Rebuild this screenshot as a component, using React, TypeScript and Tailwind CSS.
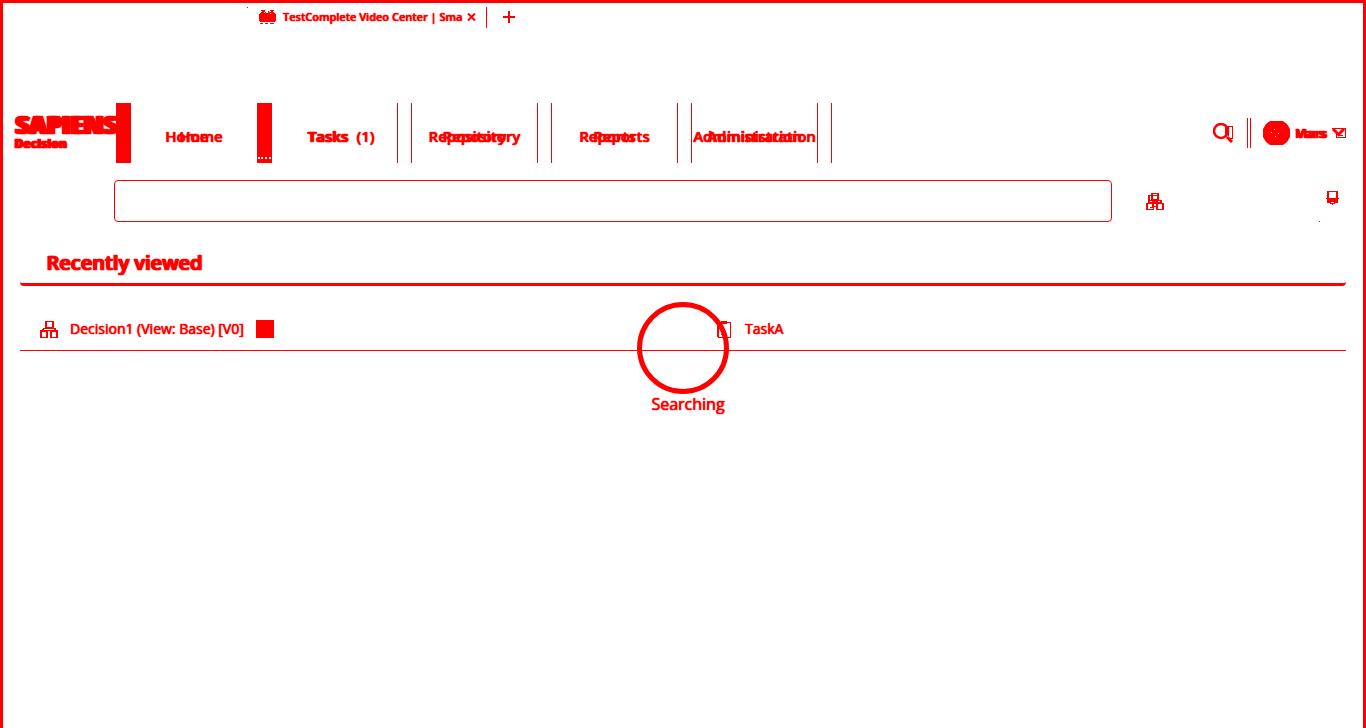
import React from "react";

function Doubled({ first, second }: { first: string; second?: string }) {
  return (
    <span className="grid place-items-center whitespace-pre [text-shadow:0_0_1px_#f00,0_0_1px_#f00]">
      <span className="col-start-1 row-start-1 pr-[14px]">{first}</span>
      <span aria-hidden={second ? undefined : true} className="col-start-1 row-start-1 pl-[14px]">
        {second ?? first}
      </span>
    </span>
  );
}

function HierarchyIcon() {
  return (
    <svg width="18" height="17" viewBox="0 0 18 17" fill="#f00" fillRule="evenodd" shapeRendering="crispEdges" aria-hidden="true">
      <path d="M5 0h9v7h2v2h2v8h-8v-7H8v7H0V9h2V8h1V7h2zM7 1v5h5V1zM4 8v1h10V8zM2 11v5h4v-5zM12 11v5h4v-5z" />
    </svg>
  );
}

function HierarchyPairIcon() {
  return (
    <svg width="18" height="17" viewBox="0 0 18 17" fill="#f00" fillRule="evenodd" shapeRendering="crispEdges" aria-hidden="true">
      <path d="M5 0h8v7h3v3h2v7h-8v-3H8v3H0v-7h2V2h3zM7 1h4v1H7zM7 3v3h4V3zM4 3v4h1V3zM4 8v1h2V8zM12 8v1h2V8zM2 11v5h5v-1H4v-1h2v-3zM12 11v5h4v-5zM8 11v2h2v-2z" />
    </svg>
  );
}

function PageIcon() {
  return (
    <svg width="17" height="14" viewBox="0 0 17 14" fill="#f00" shapeRendering="crispEdges" aria-hidden="true">
      <path d="M2 2h13v1h1v9H1V3h1zM0 4h1v7H0zM16 4h1v7h-1zM2 0h4v1H2zM11 0h4v1h-4zM3 1h3v1H3zM12 1h2v1h-2zM7 1h3v1H7zM1 13h3v1H1zM6 13h3v1H6zM11 13h4v1h-4z" />
      <path d="M7 1h2v2H7zM5 2h1v1H5zM11 3h1v1h-1z" fill="#fff" />
    </svg>
  );
}

function SearchIcon() {
  return (
    <svg width="21" height="20" viewBox="0 0 21 20" fill="none" stroke="#f00" aria-hidden="true">
      <circle cx="8" cy="8" r="7" strokeWidth="2.500" />
      <path d="M14 14l5 5" strokeWidth="3" />
      <path d="M12.500 3.500h7v12h-4M13 4v9M15.500 4v9" strokeWidth="1.500" shapeRendering="crispEdges" />
    </svg>
  );
}

function Avatar() {
  return (
    <svg width="27" height="24" viewBox="0 0 27 24" fill="#f00" aria-hidden="true">
      <path d="M7 0h13l4 3 3 5v8l-3 5-4 3H7l-4-3-3-5V8l3-5z" />
      <path d="M11 8h1v1h-1zM8 11h1v1H8zM15 12h1v1h-1zM12 15h1v1h-1z" fill="#fff" shapeRendering="crispEdges" />
    </svg>
  );
}

function MenuArrow() {
  return (
    <svg width="14" height="10" viewBox="0 0 14 10" fill="none" stroke="#f00" aria-hidden="true">
      <path d="M0 .5h13.500v1M4.500 4v5.500h8.500V2M6 7.500h5" shapeRendering="crispEdges" />
      <path d="M1 1l5.500 5.500L12 1" strokeWidth="3" />
    </svg>
  );
}

function PinIcon() {
  return (
    <svg width="13" height="14" viewBox="0 0 13 14" fill="#f00" shapeRendering="crispEdges" aria-hidden="true">
      <path d="M1 0h11v7h1v1h-1v4H9v1H7v1H6v-1H4v-1H1V8H0V7h1z" />
      <path d="M3 1h7v6H3zM5 11h3v1H5z" fill="#fff" />
    </svg>
  );
}

function ClipboardIcon() {
  return (
    <svg width="14" height="17" viewBox="0 0 14 17" fill="none" stroke="#f00" shapeRendering="crispEdges" aria-hidden="true">
      <path d="M1 1.500h12.500v15H1zM4.500.5h5v2h-5zM4 13.500h3M5 12.500h1" />
      <path d="M1 1v15" strokeWidth="2" />
    </svg>
  );
}

const tabs = ["Repository", "Reports", "Administration"];

export default function App() {
  return (
    <div className="relative min-h-screen border-x-[3px] border-t-[3px] border-[#f00] bg-white font-['Open_Sans','Noto_Sans',sans-serif] text-[#f00] [text-shadow:0_0_1px_#f00,0_0_1px_#f00]">
      <div className="flex h-[28px] items-center pl-[244px]">
        <span className="mt-1 size-px self-start bg-[#f00]" />
        <div className="ml-[11px] flex items-center">
          <PageIcon />
          <span className="ml-[7px] text-[11px] leading-5 font-semibold whitespace-nowrap">TestComplete Video Center | Sma</span>
          <button aria-label="Close tab" className="ml-[5px]">
            <svg width="9" height="8" viewBox="0 0 9 8" stroke="#f00" strokeWidth="2" aria-hidden="true"><path d="M1 .5l7 7M8 .5l-7 7" /></svg>
          </button>
        </div>
        <span className="ml-[10px] h-[21px] w-px bg-[#f00]" />
        <button aria-label="New tab" className="ml-4">
          <svg width="12" height="12" viewBox="0 0 12 12" fill="#f00" aria-hidden="true"><path d="M5 0h2v5h5v2H7v5H5V7H0V5h5z" /></svg>
        </button>
      </div>

      <header className="mt-[72px] flex h-[60px] pr-[17px]">
        <div className="w-[113px] pt-[10px] pl-[11px]">
          <div className="grid w-[104px] text-[24px] leading-6 font-extrabold">
            <span className="col-start-1 row-start-1">SAPIENS</span>
            <span aria-hidden="true" className="col-start-1 row-start-1 pl-[3px]">SAPIENS</span>
          </div>
          <div className="grid pt-px text-[12px] leading-3 font-extrabold">
            <span className="col-start-1 row-start-1">Decision</span>
            <span aria-hidden="true" className="col-start-1 row-start-1 pl-px">Decision</span>
          </div>
        </div>
        <nav className="flex text-[15px] leading-5 font-semibold">
          <span className="w-[15px] bg-[#f00]" />
          <button className="w-[126px] pt-[6px]"><Doubled first="Home" /></button>
          <span className="flex w-[15px] flex-col justify-end bg-[#f00] px-px pb-1">
            <span className="border-b-2 border-dotted border-white" />
          </span>
          <button className="mr-[13px] w-[126px] border-r border-[#f00] pt-[6px]"><Doubled first="Tasks" second="Tasks  (1)" /></button>
          {tabs.map((tab) => (
            <button key={tab} className="mr-[13px] w-[127px] border-x border-[#f00] pt-[6px]"><Doubled first={tab} /></button>
          ))}
          <span className="w-px bg-[#f00]" />
        </nav>
        <div className="ml-auto flex items-center">
          <button aria-label="Search"><SearchIcon /></button>
          <span className="ml-[13px] h-[30px] w-1 border-x border-[#f00]" />
          <button className="ml-3 flex items-center text-[13px] leading-5 font-bold">
            <Avatar />
            <span className="ml-[5px] grid w-8 text-left [text-shadow:0_0_1px_#f00,0_0_1px_#f00]">
              <span className="col-start-1 row-start-1">Mars</span>
              <span aria-hidden="true" className="col-start-1 row-start-1 pl-px">Vars</span>
            </span>
            <span className="ml-[5px]"><MenuArrow /></span>
          </button>
        </div>
      </header>

      <div className="mt-[17px] flex h-[42px] items-center pr-6 pl-[111px]">
        <input aria-label="Search text" className="h-[42px] min-w-0 flex-1 rounded border border-[#f00] px-3 outline-none" />
        <button aria-label="Decision view" className="ml-[34px]"><HierarchyPairIcon /></button>
        <span className="ml-[155px] size-px self-end bg-[#f00]" />
        <button aria-label="Pin" className="mb-[7px] ml-[6px]"><PinIcon /></button>
      </div>

      <main className="mx-[17px] mt-[23px]">
        <h1 className="grid h-[41px] rounded-b border-b-[3px] border-[#f00] pt-1 pl-[26px] text-[20px] leading-7">
          <span className="col-start-1 row-start-1 font-semibold">Recently viewed</span>
          <span aria-hidden="true" className="col-start-1 row-start-1 pl-px font-semibold">Recently viewed</span>
        </h1>
        <div className="grid h-[65px] grid-cols-2 border-b border-[#f00] pt-[33px] text-[14px] leading-5 font-medium">
          <a href="#decision" className="flex h-5 items-center pl-5">
            <HierarchyIcon />
            <span className="ml-3">Decision1 (View: Base) [V0]</span>
            <span className="ml-3 size-[18px] bg-[#f00]" />
          </a>
          <a href="#task" className="flex h-5 items-center pl-[34px]">
            <ClipboardIcon />
            <span className="ml-[14px]">TaskA</span>
          </a>
        </div>
      </main>

      <div role="status" className="pointer-events-none absolute inset-x-0 top-[299px] flex flex-col items-center">
        <svg width="92" height="92" viewBox="0 0 92 92" fill="none" stroke="#f00" strokeWidth="5" aria-hidden="true"><circle cx="46" cy="46" r="43.500" /></svg>
        <span className="pl-[10px] text-[16px] leading-5 font-medium">Searching</span>
      </div>
    </div>
  );
}
